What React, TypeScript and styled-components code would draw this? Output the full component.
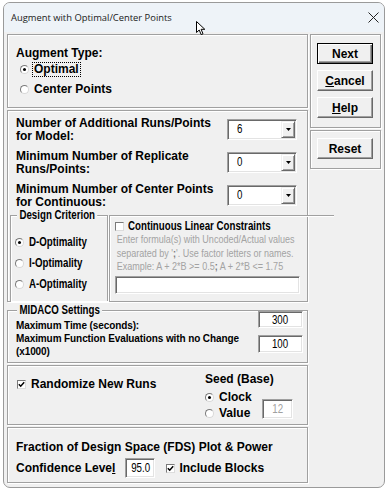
import React from "react";
import styled, { createGlobalStyle, css } from "styled-components";

const SANS = `"Liberation Sans", Arial, sans-serif`;
const UI = `"Open Sans", "Noto Sans", sans-serif`;

const GlobalStyle = createGlobalStyle`
  html, body { margin: 0; padding: 0; background: #ffffff; }
  body { font-family: ${SANS}; color: #000; }
  *, *::before, *::after { box-sizing: border-box; }
`;

const etched = css`
  border: 1px solid #a0a0a0;
  box-shadow: inset 1px 1px 0 #ffffff, 1px 1px 0 #ffffff;
`;

const sunken = css`
  background: #ffffff;
  border: 1px solid;
  border-color: #a0a0a0 #ffffff #ffffff #a0a0a0;
  box-shadow: inset 1px 1px 0 #696969, inset -1px -1px 0 #e3e3e3;
`;

/* Arial Narrow look: Arial compressed horizontally */
const Narrow = styled.span<{ $origin?: string }>`
  display: inline-block;
  white-space: nowrap;
  transform: scaleX(0.81);
  transform-origin: ${(p) => p.$origin ?? "left"} center;
`;

const Page = styled.div`
  position: relative;
  width: 390px;
  height: 491px;
  padding: 2px 0 0 3px;
  overflow: hidden;
`;

const Window = styled.div`
  width: 382px;
  height: 486px;
  border: 1px solid #9a9a9a;
  border-radius: 7px;
  background: #f0f0f0;
  overflow: hidden;
  display: flex;
  flex-direction: column;
`;

const TitleBar = styled.div`
  height: 29px;
  flex: none;
  background: #eef3f8;
  display: flex;
  align-items: center;
  justify-content: space-between;
  padding: 0 5px 0 7px;
  font-family: ${UI};
  font-size: 9.4px;
  color: #1a1a1a;
`;

const Body = styled.div`
  flex: 1;
  display: grid;
  grid-template-columns: 301px 71px;
  column-gap: 2px;
  align-items: start;
  padding: 2px 3px 0 3px;
`;

const Column = styled.div`
  display: flex;
  flex-direction: column;
  gap: 2px;
`;

const TypePanel = styled.section`
  ${etched};
  height: 74px;
  padding: 12px 0 0 8px;
`;

const Heading = styled.div`
  font-size: 12px;
  font-weight: bold;
  line-height: 12px;
`;

const ChoiceRow = styled.label<{ $h?: number; $gap?: number }>`
  display: flex;
  align-items: center;
  height: ${(p) => p.$h ?? 20}px;
  gap: ${(p) => p.$gap ?? 5}px;
  font-size: 12px;
  font-weight: bold;
  line-height: 13px;
  white-space: nowrap;
`;

const TypeChoices = styled.div`
  margin-left: 4px;
`;

const RadioDot = styled.span<{ $on?: boolean }>`
  position: relative;
  flex: none;
  width: 9px;
  height: 9px;
  border-radius: 50%;
  background: #ffffff;
  border: 1px solid;
  border-color: #7a7a7a #d8d8d8 #d8d8d8 #7a7a7a;
  &::after {
    content: "";
    position: absolute;
    left: 2px;
    top: 2px;
    width: 3px;
    height: 3px;
    border-radius: 50%;
    background: ${(p) => (p.$on ? "#000" : "transparent")};
  }
`;

const CheckBoxBox = styled.span`
  flex: none;
  display: flex;
  align-items: center;
  justify-content: center;
  width: 9px;
  height: 9px;
  background: #ffffff;
  border: 1px solid;
  border-color: #7a7a7a #dcdcdc #dcdcdc #7a7a7a;
`;

const Focus = styled.span`
  border: 1px dotted #000;
  padding: 0 1px;
  margin-left: -2px;
`;

const RunsPanel = styled.section`
  ${etched};
  height: 192px;
  padding: 6px 0 0 8px;
  display: flex;
  flex-direction: column;
`;

const Rows = styled.div`
  display: flex;
  flex-direction: column;
  gap: 7px;
`;

const SettingRow = styled.div`
  display: grid;
  grid-template-columns: 211px 70px;
  height: 26px;
`;

const RowLabel = styled.div`
  font-size: 12px;
  font-weight: bold;
  line-height: 13px;
`;

const Select = styled.div`
  ${sunken};
  margin-top: 2px;
  height: 21px;
  display: flex;
  align-items: stretch;
  padding: 1px;
`;

const SelectValue = styled.span`
  flex: 1;
  padding-left: 8px;
  font-size: 12px;
  line-height: 17px;
`;

const ArrowBtn = styled.span`
  width: 14px;
  display: flex;
  align-items: center;
  justify-content: center;
  background: #f0f0f0;
  border: 1px solid;
  border-color: #f0f0f0 #696969 #696969 #f0f0f0;
  box-shadow: inset 1px 1px 0 #ffffff, inset -1px -1px 0 #a0a0a0;
`;

const Lower = styled.div`
  flex: 1;
  display: grid;
  grid-template-columns: 98px 1fr;
  column-gap: 1px;
  margin-left: -6px;
`;

const Group = styled.div<{ $open?: boolean }>`
  position: relative;
  border: 1px solid #a0a0a0;
  ${(p) => p.$open && "border-bottom: none;"}
  box-shadow: inset 1px 1px 0 #ffffff, 1px 1px 0 #ffffff;
`;

const Legend = styled.span<{ $left: number }>`
  position: absolute;
  top: -7px;
  left: ${(p) => p.$left}px;
  padding: 0 3px;
  background: #f0f0f0;
  font-size: 12px;
  font-weight: bold;
  line-height: 13px;
  white-space: nowrap;
  transform: scaleX(0.81);
  transform-origin: left center;
`;

const CriterionGroup = styled(Group)`
  margin-top: 6px;
  padding: 16px 0 0 4px;
`;

const ConstraintBox = styled.div`
  margin-top: 6px;
  border-top: 1px solid #a0a0a0;
  border-left: 1px solid #a0a0a0;
  box-shadow: inset 1px 1px 0 #ffffff;
  padding: 4px 0 0 5px;
`;

const Hint = styled.div`
  margin-top: 1px;
  padding-left: 2px;
  font-size: 11px;
  line-height: 13.5px;
  color: #a3a3a3;
  white-space: nowrap;
  transform: scaleX(0.82);
  transform-origin: left center;
`;

const Semi = styled.b`
  color: #7a7a7a;
`;

const FormulaInput = styled.div`
  ${sunken};
  margin-top: 2.5px;
  width: 185px;
  height: 18px;
`;

const MidacoGroup = styled(Group)`
  margin-top: 6px;
  height: 53px;
  padding: 0 4px 0 8px;
`;

const MidacoRow = styled.div<{ $h: number }>`
  display: grid;
  grid-template-columns: 1fr 45px;
  align-items: start;
  height: ${(p) => p.$h}px;
`;

const SmallLabel = styled.div<{ $top: number }>`
  margin-top: ${(p) => p.$top}px;
  font-size: 10px;
  font-weight: bold;
  line-height: 13px;
  letter-spacing: -0.1px;
`;

const NumBox = styled.div<{ $w: number; $h: number; $top?: number; $muted?: boolean }>`
  ${sunken};
  width: ${(p) => p.$w}px;
  height: ${(p) => p.$h}px;
  margin-top: ${(p) => p.$top ?? 0}px;
  display: flex;
  align-items: center;
  justify-content: center;
  font-size: 12px;
  font-weight: normal;
  color: ${(p) => (p.$muted ? "#a0a0a0" : "#000")};
`;

const RandomPanel = styled.section`
  ${etched};
  height: 60px;
  display: grid;
  grid-template-columns: 189px 1fr;
  padding: 0 0 0 8px;
`;

const RandomCheck = styled(ChoiceRow)`
  margin: 12px 0 0 1px;
  height: 12px;
`;

const SeedBlock = styled.div`
  padding-top: 6px;
`;

const SeedTitle = styled.div`
  font-size: 12px;
  font-weight: bold;
  line-height: 14px;
`;

const SeedGrid = styled.div`
  display: grid;
  grid-template-columns: 57px 31px;
  align-items: start;
  margin-top: 3px;
`;

const FdsPanel = styled.section`
  ${etched};
  height: 56px;
  padding: 12px 0 0 8px;
`;

const FdsTitle = styled.div`
  font-size: 12px;
  font-weight: bold;
  line-height: 14px;
`;

const ConfRow = styled.div`
  margin-top: 4px;
  height: 20px;
  display: flex;
  align-items: center;
  font-size: 12px;
  font-weight: bold;
`;

const ConfLabel = styled.span`
  margin-right: 10px;
`;

const BlocksCheck = styled(ChoiceRow)`
  margin-left: 11px;
  gap: 4px;
`;

const U = styled.span`
  text-decoration: underline;
`;

const ButtonPanel = styled.section<{ $pt: number; $pb: number }>`
  ${etched};
  display: flex;
  flex-direction: column;
  gap: 6px;
  padding: ${(p) => p.$pt}px 0 ${(p) => p.$pb}px 6px;
`;

const Button = styled.button<{ $default?: boolean }>`
  width: 56px;
  height: 21px;
  padding: 0;
  font-family: ${SANS};
  font-size: 12px;
  font-weight: bold;
  color: #000;
  background: #f0f0f0;
  border: 1px solid;
  border-color: ${(p) => (p.$default ? "#000 #000 #000 #000" : "#ffffff #696969 #696969 #ffffff")};
  box-shadow: ${(p) =>
    p.$default
      ? "inset 1px 1px 0 #ffffff, inset -1px -1px 0 #696969, inset -2px -2px 0 #a0a0a0"
      : "inset -1px -1px 0 #a0a0a0"};
`;

const Cursor = styled.svg`
  position: absolute;
  left: 196px;
  top: 21px;
`;

const Radio = ({ on, children, h, narrow }: { on?: boolean; children: React.ReactNode; h?: number; narrow?: boolean }) => (
  <ChoiceRow $h={h}>
    <RadioDot $on={on} />
    {narrow ? <Narrow>{children}</Narrow> : <span>{children}</span>}
  </ChoiceRow>
);

const Tick = () => (
  <svg width="7" height="7" viewBox="0 0 7 7">
    <path d="M0.8 3.2 L2.7 5.2 L6.2 1.2" fill="none" stroke="#000" strokeWidth="1.5" />
  </svg>
);

const DropArrow = () => (
  <svg width="5" height="3" viewBox="0 0 5 3">
    <path d="M0 0 H5 L2.5 3 Z" fill="#000" />
  </svg>
);

const Dropdown = ({ value }: { value: string }) => (
  <Select>
    <SelectValue>
      <Narrow>{value}</Narrow>
    </SelectValue>
    <ArrowBtn>
      <DropArrow />
    </ArrowBtn>
  </Select>
);

export default function App() {
  return (
    <Page>
      <GlobalStyle />
      <Window>
        <TitleBar>
          <span>Augment with Optimal/Center Points</span>
          <svg width="11" height="11" viewBox="0 0 11 11">
            <path d="M0.5 0.5 L10.5 10.5 M10.5 0.5 L0.5 10.5" stroke="#222" strokeWidth="1" />
          </svg>
        </TitleBar>
        <Body>
          <Column>
            <TypePanel>
              <Heading>Augment Type:</Heading>
              <TypeChoices>
                <ChoiceRow $h={20}>
                  <RadioDot $on />
                  <Focus>Optimal</Focus>
                </ChoiceRow>
                <Radio>Center Points</Radio>
              </TypeChoices>
            </TypePanel>

            <RunsPanel>
              <Rows>
                <SettingRow>
                  <RowLabel>
                    Number of Additional Runs/Points
                    <br />
                    for Model:
                  </RowLabel>
                  <Dropdown value="6" />
                </SettingRow>
                <SettingRow>
                  <RowLabel>
                    Minimum Number of Replicate
                    <br />
                    Runs/Points:
                  </RowLabel>
                  <Dropdown value="0" />
                </SettingRow>
                <SettingRow>
                  <RowLabel>
                    Minimum Number of Center Points
                    <br />
                    for Continuous:
                  </RowLabel>
                  <Dropdown value="0" />
                </SettingRow>
              </Rows>
              <Lower>
                <CriterionGroup $open>
                  <Legend $left={6}>Design Criterion</Legend>
                  <Radio on h={21} narrow>D-Optimality</Radio>
                  <Radio h={21} narrow>I-Optimality</Radio>
                  <Radio h={21} narrow>A-Optimality</Radio>
                </CriterionGroup>
                <ConstraintBox>
                  <ChoiceRow $h={12} $gap={4}>
                    <CheckBoxBox />
                    <Narrow>Continuous Linear Constraints</Narrow>
                  </ChoiceRow>
                  <Hint>
                    <div>Enter formula(s) with Uncoded/Actual values</div>
                    <div>
                      separated by '<Semi>;</Semi>'. Use factor letters or names.
                    </div>
                    <div>
                      Example: A + 2*B &gt;= 0.5<Semi>;</Semi> A + 2*B &lt;= 1.75
                    </div>
                  </Hint>
                  <FormulaInput />
                </ConstraintBox>
              </Lower>
            </RunsPanel>

            <MidacoGroup>
              <Legend $left={9}>MIDACO Settings</Legend>
              <MidacoRow $h={21}>
                <SmallLabel $top={8}>Maximum Time (seconds):</SmallLabel>
                <NumBox $w={45} $h={17}>
                  <Narrow $origin="center">300</Narrow>
                </NumBox>
              </MidacoRow>
              <MidacoRow $h={28}>
                <SmallLabel $top={0}>
                  Maximum Function Evaluations with no Change
                  <br />
                  (x1000)
                </SmallLabel>
                <NumBox $w={45} $h={18} $top={3}>
                  <Narrow $origin="center">100</Narrow>
                </NumBox>
              </MidacoRow>
            </MidacoGroup>

            <RandomPanel>
              <RandomCheck $gap={5}>
                <CheckBoxBox>
                  <Tick />
                </CheckBoxBox>
                <span>Randomize New Runs</span>
              </RandomCheck>
              <SeedBlock>
                <SeedTitle>Seed (Base)</SeedTitle>
                <SeedGrid>
                  <div>
                    <Radio on h={16}>Clock</Radio>
                    <Radio h={16}>Value</Radio>
                  </div>
                  <NumBox $w={31} $h={20} $top={10} $muted>
                    <Narrow $origin="center">12</Narrow>
                  </NumBox>
                </SeedGrid>
              </SeedBlock>
            </RandomPanel>

            <FdsPanel>
              <FdsTitle>Fraction of Design Space (FDS) Plot &amp; Power</FdsTitle>
              <ConfRow>
                <ConfLabel>
                  Confidence Leve<U>l</U>
                </ConfLabel>
                <NumBox $w={30} $h={20}>
                  <Narrow $origin="center">95.0</Narrow>
                </NumBox>
                <BlocksCheck>
                  <CheckBoxBox>
                    <Tick />
                  </CheckBoxBox>
                  <span>Include Blocks</span>
                </BlocksCheck>
              </ConfRow>
            </FdsPanel>
          </Column>

          <Column>
            <ButtonPanel $pt={8} $pb={9}>
              <Button $default>Next</Button>
              <Button>
                <U>C</U>ancel
              </Button>
              <Button>
                <U>H</U>elp
              </Button>
            </ButtonPanel>
            <ButtonPanel $pt={7} $pb={9}>
              <Button>Reset</Button>
            </ButtonPanel>
          </Column>
        </Body>
      </Window>
      <Cursor width="11" height="15" viewBox="0 0 11 15">
        <path d="M0.5 0.5 L0.5 11.5 L3.2 9 L5.2 13.6 L7 12.8 L5.1 8.3 L8.8 8.3 Z" fill="#fff" stroke="#000" strokeWidth="1" strokeLinejoin="round" />
      </Cursor>
    </Page>
  );
}
